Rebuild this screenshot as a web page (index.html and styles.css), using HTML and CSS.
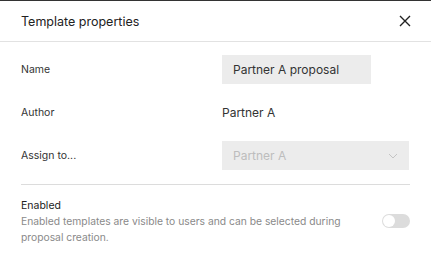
FILE: index.html
```html
<!DOCTYPE html>
<html lang="en">
<head>
    <meta charset="UTF-8">
    <meta name="viewport" content="width=device-width, initial-scale=1.0">
    <title>Template properties</title>
    <link rel="stylesheet" href="styles.css">
</head>
<body>

<div class="panel">
    <header class="panel-header">
        <h1>Template properties</h1>
        <button class="close" aria-label="Close">
            <svg width="12" height="12" viewBox="0 0 12 12"><path d="M1 1L11 11M11 1L1 11" stroke="#222" stroke-width="1.4" fill="none"/></svg>
        </button>
    </header>

    <div class="panel-body">
        <div class="row">
            <label for="nome">Name</label>
            <input type="text" id="nome" class="field field-name" value="Partner A proposal">
        </div>
        <div class="row">
            <label>Author</label>
            <span class="value">Partner A</span>
        </div>
        <div class="row">
            <label>Assign to...</label>
            <div class="field field-select">
                <span>Partner A</span>
                <svg width="10" height="6" viewBox="0 0 10 6"><path d="M1 1L5 5L9 1" stroke="#c4c4c4" stroke-width="1" fill="none"/></svg>
            </div>
        </div>

        <div class="toggle-row">
            <div class="toggle-text">
                <div class="toggle-title">Enabled</div>
                <p>Enabled templates are visible to users and can be selected during proposal creation.</p>
            </div>
            <div class="switch"><span class="knob"></span></div>
        </div>
    </div>
</div>

</body>
</html>
```

FILE: styles.css
```css
body {
    margin: 0;
    font-family: Inter, "Noto Sans", sans-serif;
    background: #fff;
    color: #222;
}
.panel {
    border-top: 1px solid #333;
}
.panel-header {
    height: 40px;
    display: flex;
    align-items: center;
    justify-content: space-between;
    padding: 0 21px;
    border-bottom: 1px solid #e2e2e2;
}
.panel-header h1 {
    margin: 0;
    font-size: 12.5px;
    font-weight: 400;
    color: #222;
}
.close {
    border: none;
    background: none;
    padding: 0;
    width: 12px;
    height: 12px;
    margin-right: -1px;
    cursor: pointer;
    display: flex;
}
.panel-body {
    padding: 13px 21px 0;
}
.row {
    display: flex;
    align-items: center;
    height: 29px;
    margin-bottom: 14px;
}
.row label {
    width: 201px;
    font-size: 10.5px;
    color: #333;
}
.value {
    font-size: 12px;
    color: #333;
}
.field {
    box-sizing: border-box;
    height: 29px;
    border: none;
    border-radius: 0;
    background: #ececec;
    font-family: inherit;
    font-size: 12px;
    color: #333;
    padding: 0 11px;
    margin: 0;
}
.field-name {
    width: 149px;
}
.field-select {
    width: 187px;
    display: flex;
    align-items: center;
    justify-content: space-between;
    color: #bdbdbd;
    padding-right: 11px;
}
.toggle-row {
    border-top: 1px solid #dcdcdc;
    margin-top: 1px;
    padding-top: 14px;
    display: flex;
    align-items: center;
    justify-content: space-between;
}
.toggle-title {
    font-size: 10.5px;
    color: #222;
    line-height: 14px;
}
.toggle-text p {
    margin: 0;
    font-size: 10.3px;
    line-height: 16px;
    color: #8a8a8a;
    max-width: 330px;
}
.switch {
    width: 28px;
    height: 14px;
    border-radius: 7px;
    background: #dcdcdc;
    position: relative;
    flex-shrink: 0;
    margin-top: -2px;
}
.knob {
    position: absolute;
    left: 1px;
    top: 1px;
    width: 12px;
    height: 12px;
    border-radius: 50%;
    background: #fff;
}
```
